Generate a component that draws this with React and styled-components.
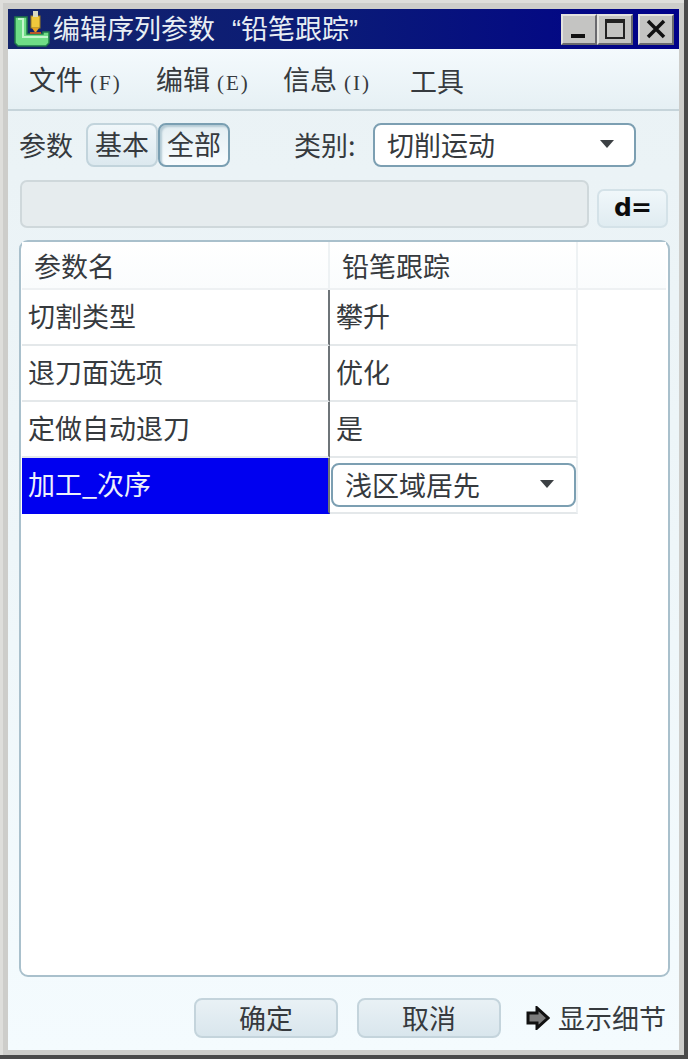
import React from 'react'
import styled, { createGlobalStyle } from 'styled-components'

const Global = createGlobalStyle`
  html, body { margin: 0; padding: 0; background: #c8c8c6; }
  * { box-sizing: border-box; }
`

const Frame = styled.div`
  width: 688px;
  height: 1059px;
  padding: 9px 9px 9px 8px;
  background: #cdcdca;
  box-shadow: inset -4px -4px 0 #4a4a4a, inset 3px 3px 0 #dededb;
  font-family: "Noto Sans CJK SC", "Liberation Sans", sans-serif;
  font-size: 27px;
  color: #363a3e;
  display: flex;
  flex-direction: column;
  overflow: hidden;
`

const TitleBar = styled.div`
  height: 40px;
  flex: none;
  background: linear-gradient(90deg, #14256a 0%, #0a1a78 50%, #00008a 100%);
  color: #e8eef4;
  display: flex;
  align-items: center;
  padding: 0 5px 0 5px;
`

const TitleText = styled.div`
  margin-left: 2px;
  line-height: 38px;
  white-space: nowrap;
  flex: 1;
`

const Quote = styled.span`
  font-family: "Liberation Sans", sans-serif;
  margin-left: ${p => p.$ml || 0}px;
`

const WinButton = styled.div`
  width: 36px;
  height: 31px;
  background: #c4c4c2;
  border: 2px solid;
  border-color: #e2e2de #6a6a6e #6a6a6e #e2e2de;
  margin-left: ${p => p.$gap || 0}px;
  display: flex;
  align-items: center;
  justify-content: center;
`

const Body = styled.div`
  flex: 1;
  background: linear-gradient(180deg, #eaf2f5 0%, #eef6f9 50%, #f4fbfe 100%);
  display: flex;
  flex-direction: column;
`

const MenuBar = styled.div`
  height: 62px;
  flex: none;
  background: linear-gradient(180deg, #f4fafd 0%, #e6f0f4 100%);
  border-bottom: 2px solid #c6d4da;
  display: flex;
  align-items: center;
  padding: 4px 0 0 21px;
`

const MenuItem = styled.div`
  width: 127px;
  flex: none;
  line-height: 36px;
  white-space: nowrap;
`

const Key = styled.span`
  font-family: "Liberation Serif", serif;
  font-size: 21px;
  letter-spacing: 2px;
  margin-left: 7px;
`

const ParamRow = styled.div`
  display: flex;
  align-items: center;
  height: 44px;
  margin-top: 12px;
  padding-left: 11px;
  flex: none;
`

const Label = styled.div`
  line-height: 42px;
  white-space: nowrap;
  width: ${p => p.$w}px;
  margin-left: ${p => p.$ml || 0}px;
  flex: none;
`

const Toggle = styled.div`
  width: 72px;
  height: 44px;
  flex: none;
  border-radius: 8px;
  text-align: center;
  line-height: 38px;
  border: 2px solid ${p => (p.$on ? '#7a9fb2' : '#c2d4dc')};
  background: ${p => (p.$on ? 'linear-gradient(180deg,#e4eef2,#f8fcfe)' : 'linear-gradient(180deg,#f0f7fa,#dce9ef)')};
  box-shadow: ${p => (p.$on ? 'inset 2px 2px 2px #b4cad4' : 'none')};
  margin-left: ${p => p.$ml || 0}px;
`

const Select = styled.div`
  height: ${p => p.$h}px;
  width: ${p => p.$w}px;
  flex: none;
  background: #fff;
  border: 2px solid #7c9fb2;
  border-radius: 8px;
  display: flex;
  align-items: center;
  justify-content: space-between;
  padding: 0 ${p => p.$pr}px 2px ${p => p.$pl}px;
  line-height: 1;
  white-space: nowrap;
`

const Caret = styled.div`
  width: 0;
  height: 0;
  border-left: 7px solid transparent;
  border-right: 7px solid transparent;
  border-top: 8px solid #3c4044;
`

const FormulaRow = styled.div`
  display: flex;
  align-items: flex-end;
  height: 48px;
  margin-top: 13px;
  padding-left: 12px;
  flex: none;
`

const FormulaInput = styled.div`
  width: 569px;
  height: 48px;
  background: #e6ecee;
  border: 2px solid #cfd8db;
  border-radius: 7px;
`

const FormulaButton = styled.div`
  width: 71px;
  height: 39px;
  margin-left: 8px;
  border: 2px solid #d4e2e8;
  border-radius: 7px;
  background: linear-gradient(180deg, #f0f7fa, #e0ecf1);
  font-family: "DejaVu Sans", sans-serif;
  font-weight: 700;
  font-size: 25px;
  letter-spacing: -1px;
  line-height: 33px;
  text-align: center;
  color: #0c0c0c;
`

const Panel = styled.div`
  margin: 12px 0 0 11px;
  width: 651px;
  height: 737px;
  flex: none;
  background: #fff;
  border: 2px solid #a9c0cc;
  border-radius: 9px;
  padding-left: 1px;
`

const HeaderRow = styled.div`
  display: flex;
  height: 48px;
  width: 644px;
  background: linear-gradient(180deg, #fff, #fafcfd);
  border-bottom: 2px solid #eef1f3;
`

const HeaderCell = styled.div`
  width: ${p => p.$w}px;
  flex: none;
  padding-left: ${p => p.$pl}px;
  line-height: 48px;
  border-right: 2px solid #eef2f4;
`

const Row = styled.div`
  display: flex;
  height: ${p => p.$h || 56}px;
  width: 556px;
`

const NameCell = styled.div`
  width: 308px;
  flex: none;
  padding-left: 6px;
  line-height: 52px;
  white-space: nowrap;
  background: ${p => (p.$active ? '#0000f0' : '#fff')};
  color: ${p => (p.$active ? '#eef2fa' : 'inherit')};
  border-bottom: 2px solid ${p => (p.$active ? '#0000f0' : '#e4e8ea')};
  border-right: 2px solid #6e7478;
`

const ValueCell = styled.div`
  width: 248px;
  flex: none;
  padding-left: 6px;
  line-height: 52px;
  white-space: nowrap;
  border-bottom: 2px solid #e4e8ea;
  border-right: 2px solid #eef1f3;
`

const EditCell = styled(ValueCell)`
  padding: 5px 0 0 1px;
  line-height: 1;
`

const Footer = styled.div`
  display: flex;
  align-items: center;
  height: 40px;
  margin-top: 21px;
  padding-left: 186px;
  flex: none;
`

const FootButton = styled.div`
  width: 144px;
  height: 40px;
  margin-right: 19px;
  flex: none;
  border: 2px solid #c4d4dc;
  border-radius: 8px;
  background: linear-gradient(180deg, #e9f1f5, #d9e6ed);
  text-align: center;
  line-height: 35px;
`

const Details = styled.div`
  display: flex;
  align-items: center;
  margin-left: 6px;
  white-space: nowrap;
`

const DetailsText = styled.span`
  margin-left: 8px;
  line-height: 38px;
`

function AppIcon() {
  return (
    <svg width="38" height="36" viewBox="0 0 38 36">
      <path d="M2 6h12v17h16v-2h6v11l-3 3H5l-3-3z" fill="#6fdc86" stroke="#1f7a4a" strokeWidth="1.5" />
      <path d="M5 8h5v18h25" fill="none" stroke="#c4f5cc" strokeWidth="2" />
      <rect x="18" y="5" width="9" height="12" fill="#f0c83c" stroke="#9a7a20" />
      <rect x="20" y="0" width="5" height="6" fill="#d8d8c0" />
      <path d="M19 17h7l-3.500 5z" fill="#e8a020" />
      <rect x="17" y="21" width="11" height="2" fill="#b8562a" />
    </svg>
  )
}

function ArrowIcon() {
  return (
    <svg width="24" height="24" viewBox="0 0 24 24">
      <path d="M2 7h9V2l11 10-11 10v-5H2z" fill="#7c7c7c" stroke="#111" strokeWidth="3" />
    </svg>
  )
}

const rows = [
  ['切割类型', '攀升'],
  ['退刀面选项', '优化'],
  ['定做自动退刀', '是'],
]

export default function App() {
  return (
    <Frame>
      <Global />
      <TitleBar>
        <AppIcon />
        <TitleText>编辑序列参数<Quote $ml={17}>“</Quote>铅笔跟踪<Quote>”</Quote></TitleText>
        <WinButton>
          <svg width="20" height="20" viewBox="0 0 20 20"><rect x="2" y="15" width="14" height="4" fill="#111" /></svg>
        </WinButton>
        <WinButton>
          <svg width="24" height="24" viewBox="0 0 24 24"><rect x="3" y="3" width="18" height="18" fill="none" stroke="#222" strokeWidth="2" /><rect x="2" y="2" width="20" height="4" fill="#222" /></svg>
        </WinButton>
        <WinButton $gap={5}>
          <svg width="22" height="20" viewBox="0 0 22 20"><path d="M3 2l16 16M19 2L3 18" stroke="#111" strokeWidth="3.5" /></svg>
        </WinButton>
      </TitleBar>
      <Body>
        <MenuBar>
          <MenuItem>文件<Key>(F)</Key></MenuItem>
          <MenuItem>编辑<Key>(E)</Key></MenuItem>
          <MenuItem>信息<Key>(I)</Key></MenuItem>
          <MenuItem>工具</MenuItem>
        </MenuBar>
        <ParamRow>
          <Label $w={67}>参数</Label>
          <Toggle>基本</Toggle>
          <Toggle $on>全部</Toggle>
          <Label $w={79} $ml={64}>类别:</Label>
          <Select $w={263} $h={44} $pl={12} $pr={20}>切削运动<Caret /></Select>
        </ParamRow>
        <FormulaRow>
          <FormulaInput />
          <FormulaButton>d=</FormulaButton>
        </FormulaRow>
        <Panel>
          <HeaderRow>
            <HeaderCell $w={308} $pl={12}>参数名</HeaderCell>
            <HeaderCell $w={248} $pl={12}>铅笔跟踪</HeaderCell>
          </HeaderRow>
          {rows.map(([name, value]) => (
            <Row key={name}>
              <NameCell>{name}</NameCell>
              <ValueCell>{value}</ValueCell>
            </Row>
          ))}
          <Row>
            <NameCell $active>加工_次序</NameCell>
            <EditCell>
              <Select $w={245} $h={44} $pl={12} $pr={20}>浅区域居先<Caret /></Select>
            </EditCell>
          </Row>
        </Panel>
        <Footer>
          <FootButton>确定</FootButton>
          <FootButton>取消</FootButton>
          <Details>
            <ArrowIcon />
            <DetailsText>显示细节</DetailsText>
          </Details>
        </Footer>
      </Body>
    </Frame>
  )
}
